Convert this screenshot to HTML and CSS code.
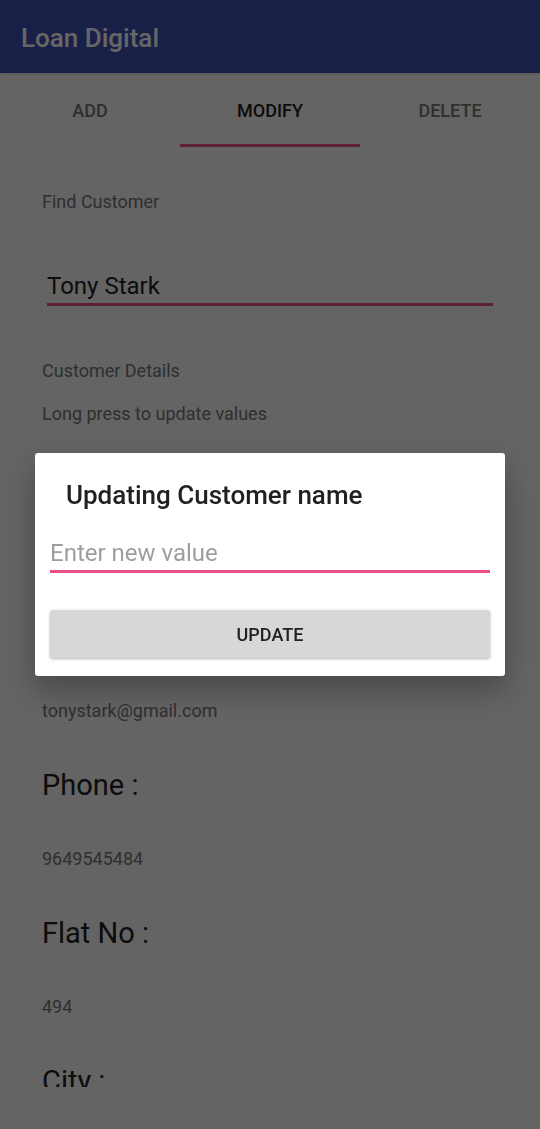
FILE: index.html
```html
<!DOCTYPE html>
<html lang="en">
<head>
<meta charset="utf-8">
<meta name="viewport" content="width=device-width, initial-scale=1">
<title>Loan Digital</title>
<link rel="stylesheet" href="styles.css">
</head>
<body>
<div class="app">
  <header class="app-bar">
    <h1 class="app-title">Loan Digital</h1>
  </header>
  <nav class="tabs" role="tablist">
    <button class="tab" type="button" role="tab" aria-selected="false">ADD</button>
    <button class="tab tab-active" type="button" role="tab" aria-selected="true">MODIFY</button>
    <button class="tab" type="button" role="tab" aria-selected="false">DELETE</button>
  </nav>
  <main class="content">
    <label class="caption" for="find">Find Customer</label>
    <div class="search">
      <input class="field" id="find" type="text" value="Tony Stark">
    </div>
    <div class="intro">
      <p class="caption">Customer Details</p>
      <p class="caption">Long press to update values</p>
    </div>
    <dl class="details">
      <dd class="value">tonystark@gmail.com</dd>
      <dt class="term">Phone :</dt>
      <dd class="value">9649545484</dd>
      <dt class="term">Flat No :</dt>
      <dd class="value">494</dd>
      <dt class="term">City :</dt>
    </dl>
  </main>
</div>
<div class="scrim">
  <form class="dialog" role="dialog" aria-modal="true" aria-labelledby="dialog-title">
    <h2 class="dialog-title" id="dialog-title">Updating Customer name</h2>
    <input class="field dialog-field" type="text" placeholder="Enter new value" aria-labelledby="dialog-title">
    <button class="update" type="button">UPDATE</button>
  </form>
</div>
</body>
</html>
```

FILE: styles.css
```css
* {
  box-sizing: border-box;
}

body {
  margin: 0;
  background: #fafafa;
  color: #212121;
  font-family: Roboto, "Noto Sans", sans-serif;
}

h1, h2, p, dl, dd {
  margin: 0;
}

button, input {
  border: 0;
  font-family: inherit;
}

.app {
  display: flex;
  flex-direction: column;
  height: 100vh;
}

.app-bar {
  display: flex;
  align-items: center;
  flex: none;
  height: 73px;
  padding: 2px 21px 0;
  background: #3f51b5;
  box-shadow: 0 1px 2px rgba(0, 0, 0, 0.15);
}

.app-title {
  color: #fff;
  font-size: 26px;
  font-weight: 500;
  line-height: 32px;
}

.tabs {
  display: grid;
  grid-template-columns: repeat(3, 1fr);
  flex: none;
  height: 74px;
}

.tab {
  padding: 3px 0 0;
  border-bottom: 3px solid transparent;
  background: transparent;
  color: #757575;
  font-size: 18px;
  font-weight: 500;
}

.tab-active {
  border-bottom-color: #e9508a;
  color: #212121;
}

.content {
  display: flex;
  flex: 1;
  flex-direction: column;
  min-height: 0;
  padding: 44px 42px 42px;
}

.caption, .value {
  color: #757575;
  font-size: 18px;
  line-height: 22px;
}

.search {
  padding: 53px 5px 54px;
}

.field {
  display: block;
  width: 100%;
  height: 40px;
  padding: 3px 0 0;
  border-bottom: 3px solid #e9508a;
  border-radius: 0;
  outline: 0;
  background: transparent;
  color: #212121;
  font-size: 24px;
}

.field::placeholder {
  color: #9e9e9e;
  opacity: 1;
}

.intro {
  display: flex;
  flex-direction: column;
  gap: 21px;
}

.details {
  display: flex;
  flex: 1;
  flex-direction: column;
  gap: 46px;
  min-height: 0;
  padding-top: 275px;
  overflow: hidden;
}

.term {
  flex: none;
  font-size: 29px;
  line-height: 34px;
}

.scrim {
  position: fixed;
  inset: 0;
  display: flex;
  align-items: center;
  justify-content: center;
  padding: 35px;
  background: rgba(0, 0, 0, 0.6);
}

.dialog {
  flex: 1;
  padding: 26px 15px 18px;
  border-radius: 3px;
  background: #fff;
  box-shadow: 0 14px 32px rgba(0, 0, 0, 0.3);
}

.dialog-title {
  padding: 0 16px;
  font-size: 26px;
  font-weight: 500;
  line-height: 32px;
}

.dialog-field {
  margin: 22px 0 37px;
}

.update {
  display: block;
  width: 100%;
  height: 48px;
  padding: 0;
  border-radius: 3px;
  background: #d6d7d7;
  box-shadow: 0 1px 3px rgba(0, 0, 0, 0.3);
  color: #212121;
  font-size: 18px;
  font-weight: 500;
}
```
